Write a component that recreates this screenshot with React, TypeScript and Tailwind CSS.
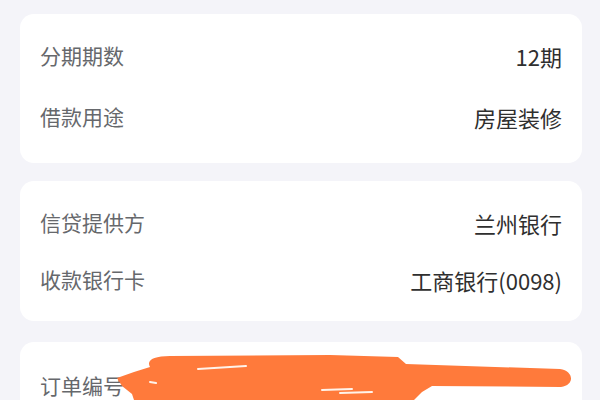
// Loan order detail: info cards with a redacted order number
const FONT = { fontFamily: '"Noto Sans CJK SC", "Noto Sans", sans-serif' };

interface Row {
  label: string;
  value: string;
}

function InfoCard({ rows, rowClass, padClass }: { rows: Row[]; rowClass: string; padClass: string }) {
  return (
    <div className={`mx-5 w-[562px] rounded-[14px] bg-white px-5 ${padClass}`}>
      {rows.map((r) => (
        <div key={r.label} className={`flex items-center justify-between ${rowClass}`}>
          <span className="text-[21px] leading-none text-[#66686c]">{r.label}</span>
          <span className="text-[22px] leading-none text-[#2f2f2f]">{r.value}</span>
        </div>
      ))}
    </div>
  );
}

export default function App() {
  return (
    <div className="relative h-[400px] w-[600px] overflow-hidden bg-[#f4f4f9] pt-[14px]" style={FONT}>
      <InfoCard
        padClass="pt-[11px] pb-[16px]"
        rowClass="h-[61px]"
        rows={[
          { label: "分期期数", value: "12期" },
          { label: "借款用途", value: "房屋装修" },
        ]}
      />
      <div className="h-[18px]" />
      <InfoCard
        padClass="pt-[13px] pb-[13px]"
        rowClass="h-[57px]"
        rows={[
          { label: "信贷提供方", value: "兰州银行" },
          { label: "收款银行卡", value: "工商银行(0098)" },
        ]}
      />
      <div className="h-[21px]" />
      <div className="mx-5 h-[80px] w-[562px] rounded-[14px] bg-white px-5 pt-[33px]">
        <span className="text-[21px] leading-none text-[#66686c]">订单编号</span>
      </div>

      {/* orange marker scribble covering the order number */}
      <svg className="absolute left-0 top-0" width="600" height="400" viewBox="0 0 600 400">
        <path
          d="M117,378 L134,372 L150,367 C146,360 154,356 170,356 L330,355 L398,357 L406,364 L560,369 C574,371 575,385 561,387 L432,386 L422,392 L414,400 L134,400 L132,394 L122,386 Z"
          fill="#ff7a3b"
        />
        <path d="M198,369 L246,366" stroke="#fff3ea" strokeWidth="2" strokeLinecap="round" />
        <path d="M150,382 L156,383" stroke="#fff3ea" strokeWidth="2" strokeLinecap="round" />
        <path d="M322,390 L352,389" stroke="#fff3ea" strokeWidth="2" strokeLinecap="round" />
        <path d="M340,393 L372,392" stroke="#fff3ea" strokeWidth="2" strokeLinecap="round" />
      </svg>
    </div>
  );
}
